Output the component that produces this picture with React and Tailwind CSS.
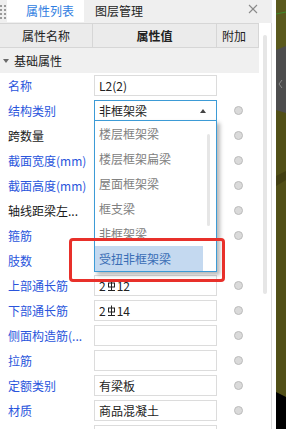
import React from "react";

const FONT = { fontFamily: '"Noto Sans CJK SC", "Noto Sans", sans-serif' };

function Rebar({ n, d }) {
  return (
    <span className="inline-flex items-center">
      <span>{n}</span>
      <svg width="9" height="12" viewBox="0 0 9 12" className="mx-[1px]">
        <line x1="4.5" y1="0.5" x2="4.5" y2="11" stroke="#222" strokeWidth="1" />
        <rect x="1.5" y="3" width="6" height="4" fill="none" stroke="#222" strokeWidth="1" />
        <line x1="1" y1="10.5" x2="8" y2="10.5" stroke="#222" strokeWidth="1" />
      </svg>
      <span>{d}</span>
    </span>
  );
}

const rows = [
  { label: "名称", blue: true, value: "L2(2)", circle: false },
  { label: "结构类别", blue: true, value: "非框架梁", select: true, circle: true },
  { label: "跨数量", blue: false, circle: true },
  { label: "截面宽度(mm)", blue: true, circle: true },
  { label: "截面高度(mm)", blue: true, circle: true },
  { label: "轴线距梁左...", blue: false, circle: true },
  { label: "箍筋", blue: true, circle: true },
  { label: "肢数", blue: true, circle: false },
  { label: "上部通长筋", blue: true, value: <Rebar n="2" d="12" />, circle: true },
  { label: "下部通长筋", blue: true, value: <Rebar n="2" d="14" />, circle: true },
  { label: "侧面构造筋(...", blue: true, circle: true },
  { label: "拉筋", blue: true, circle: true },
  { label: "定额类别", blue: true, value: "有梁板", circle: true },
  { label: "材质", blue: true, value: "商品混凝土", circle: true },
  { label: "", blue: true, circle: false },
];

const options = ["楼层框架梁", "楼层框架扁梁", "屋面框架梁", "框支梁", "非框架梁", "受扭非框架梁"];

function Row({ r }) {
  return (
    <div className="grid grid-cols-[93px_124px_42px] h-[25px] shrink-0">
      <div
        className={`pl-[8px] text-[12px] leading-[25px] whitespace-nowrap overflow-hidden ${
          r.blue ? "text-[#2a55dc]" : "text-[#1a1a1a]"
        }`}
      >
        {r.label}
      </div>
      <div className="pl-[1px] pt-[2px]">
        <div
          className={`w-[123px] h-[21px] border px-[4px] text-[12px] leading-[19px] text-[#222] flex items-center justify-between bg-white ${
            r.select ? "border-[#3d9bd6]" : "border-[#dcdcdc]"
          }`}
        >
          <span>{r.value}</span>
          {r.select && (
            <svg width="6" height="4" viewBox="0 0 6 4" className="mr-[6px]">
              <polygon points="3,0 6,4 0,4" fill="#444" />
            </svg>
          )}
        </div>
      </div>
      <div className="flex items-center justify-center">
        {r.circle && <div className="w-[9px] h-[9px] rounded-full bg-[#dadada] border border-[#bcbcbc]" />}
      </div>
    </div>
  );
}

export default function App() {
  return (
    <div className="w-[286px] h-[429px] flex overflow-hidden bg-white" style={FONT}>
      <div className="w-[272px] h-full flex flex-col shrink-0">
        {/* tab bar */}
        <div className="h-[23px] bg-[#efefef] flex items-stretch shrink-0">
          <div className="w-[7px] grid grid-cols-2 content-center gap-y-[2px] pl-[0px] pt-[1px]">
            {[0, 1, 2, 3, 4, 5, 6, 7].map((i) => (
              <div key={i} className="w-[2px] h-[2px] bg-[#9a9a9a]" />
            ))}
          </div>
          <div className="w-[77px] bg-white h-[22px] pl-[19px] text-[12px] leading-[22px] text-[#2f7de1]">属性列表</div>
          <div className="ml-[11px] text-[12px] leading-[22px] text-[#222]">图层管理</div>
          <div className="flex-1 flex justify-end items-start pt-[4px] pr-[14px]">
            <svg width="10" height="10" viewBox="0 0 10 10">
              <line x1="1" y1="1" x2="9" y2="9" stroke="#8a8a8a" strokeWidth="1.1" />
              <line x1="9" y1="1" x2="1" y2="9" stroke="#8a8a8a" strokeWidth="1.1" />
            </svg>
          </div>
        </div>
        {/* body */}
        <div className="relative flex-1 flex border-r border-[#dcdcdc] overflow-hidden">
          <div className="w-[259px] flex flex-col shrink-0">
            <div className="grid grid-cols-[93px_124px_42px] h-[25px] bg-[#ebebeb] border-y border-[#d6d6d6] shrink-0 text-[12px] text-[#222]">
              <div className="flex items-center justify-center border-r border-[#d6d6d6]">属性名称</div>
              <div className="flex items-center justify-center border-r border-[#d6d6d6] font-bold">属性值</div>
              <div className="flex items-center pl-[5px] border-r border-[#d6d6d6]">附加</div>
            </div>
            <div className="h-[25px] bg-[#f0f0f0] flex items-center shrink-0 text-[12px] text-[#222]">
              <svg width="6" height="4" viewBox="0 0 6 4" className="ml-[3px] mr-[5px]">
                <polygon points="0,0 6,0 3,4" fill="#6a6a6a" />
              </svg>
              基础属性
            </div>
            {rows.map((r, i) => (
              <Row key={i} r={r} />
            ))}
          </div>
          <div className="flex-1 pl-[4px] pt-[12px]">
            <div className="w-[4px] h-[259px] rounded-full bg-[#e6e6e6]" />
          </div>

          {/* dropdown */}
          <div className="absolute left-[94px] top-[97px] w-[123px] border border-[#3d9bd6] bg-white shadow-[3px_3px_4px_rgba(0,0,0,0.28)] flex">
            <div className="w-[108px] flex flex-col">
              {options.map((o, i) => (
                <div
                  key={o}
                  className={`h-[25px] pl-[4px] text-[12px] leading-[25px] whitespace-nowrap ${
                    i === 5 ? "bg-[#c4d9f0] text-[#3a6db5]" : "text-[#808080]"
                  }`}
                >
                  {o}
                </div>
              ))}
            </div>
            <div className="flex-1 pl-[4px] pt-[13px]">
              <div className="w-[3px] h-[92px] rounded-full bg-[#e6e6e6]" />
            </div>
          </div>

          {/* annotation */}
          <div className="absolute left-[69px] top-[215px] w-[156px] h-[44px] border-[3px] border-[#e8302a] rounded-[4px]" />
        </div>
      </div>
      {/* viewport strip */}
      <div className="flex-1 h-full pl-[4px] bg-white">
        <svg width="10" height="429" viewBox="0 0 10 429" className="block">
          <rect x="0" y="0" width="10" height="429" fill="#514f17" />
          <rect x="0" y="0" width="10" height="52" fill="#5a591d" />
          <line x1="0" y1="14" x2="10" y2="12" stroke="#3f8a2c" strokeWidth="1" />
          <polygon points="0,50 10,46 10,113 0,110" fill="#4d4d4d" />
          <polyline points="6,80 3,84 6,88" fill="none" stroke="#8a8a8a" strokeWidth="1" />
          <polygon points="0,176 10,171 10,180 0,186" fill="#423f12" />
          <polygon points="0,392 10,397 10,429 0,429" fill="#000" />
        </svg>
      </div>
    </div>
  );
}
